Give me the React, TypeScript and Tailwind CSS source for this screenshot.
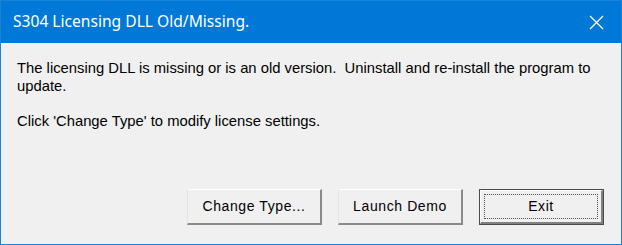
const Btn = ({ label, w, isDefault }: { label: string; w: string; isDefault?: boolean }) => {
  if (isDefault) {
    return (
      <div className={`${w} h-[36px] border border-[#4a4a4a] bg-[#f0f0f0]`}>
        <div className="w-full h-full border-t border-l border-t-white border-l-white border-b-2 border-r-2 border-b-[#808080] border-r-[#808080] p-[3px]">
          <div className="w-full h-full border border-dotted border-[#505050] flex items-center justify-center text-[14px] tracking-[0.6px] text-black">
            {label}
          </div>
        </div>
      </div>
    );
  }
  return (
    <div className={`${w} h-[36px] bg-[#f0f0f0] border-t border-l border-t-[#ffffff] border-l-[#e3e3e3] border-b-2 border-r-2 border-b-[#8a8a8a] border-r-[#8a8a8a] flex items-center justify-center text-[14px] tracking-[0.6px] text-black`}>
      {label}
    </div>
  );
};

export default function App() {
  return (
    <div className="w-[622px] h-[245px] bg-white">
      <div className="w-full h-full border border-[#1883d7] flex flex-col bg-[#f0f0f0]">
        <div className="h-[42px] bg-[#0078d7] flex items-center justify-between pl-[12px] pr-[17px] shrink-0">
          <span className="text-white text-[15.6px]" style={{ fontFamily: '"Noto Sans", "Open Sans", sans-serif' }}>
            S304 Licensing DLL Old/Missing.
          </span>
          <svg width="15" height="15" viewBox="0 0 15 15">
            <path d="M1 1 L14 14 M14 1 L1 14" stroke="white" strokeWidth="1.3" fill="none" />
          </svg>
        </div>
        <div className="flex-1 flex flex-col px-[16px] pt-[16px]" style={{ fontFamily: '"Liberation Sans", Arial, sans-serif' }}>
          <p className="text-[14.8px] leading-[18px] text-black whitespace-nowrap">
            The licensing DLL is missing or is an old version.&nbsp; Uninstall and re-install the program to
            <br />
            update.
          </p>
          <p className="text-[14.8px] leading-[18px] text-black mt-[17px]">
            Click 'Change Type' to modify license settings.
          </p>
          <div className="mt-auto mb-[19px] flex justify-end gap-[16px] pr-[1px]">
            <Btn label="Change Type..." w="w-[135px]" />
            <Btn label="Launch Demo" w="w-[125px]" />
            <Btn label="Exit" w="w-[125px]" isDefault />
          </div>
        </div>
      </div>
    </div>
  );
}
